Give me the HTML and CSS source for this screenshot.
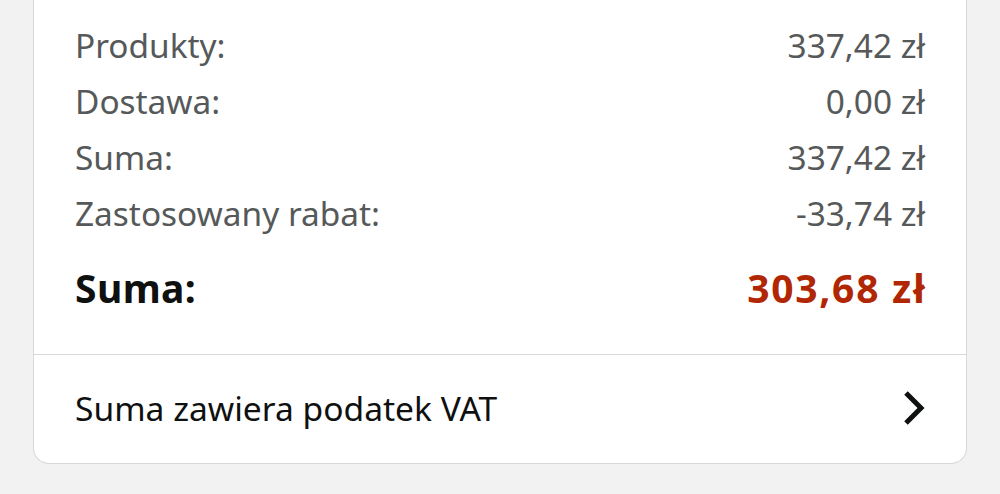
FILE: index.html
```html
<!DOCTYPE html>
<html lang="pl">
<head>
<meta charset="utf-8">
<link rel="stylesheet" href="styles.css">
</head>
<body>
<div class="card">
  <div class="summary">
    <div class="row"><span>Produkty:</span><span>337,42 zł</span></div>
    <div class="row"><span>Dostawa:</span><span>0,00 zł</span></div>
    <div class="row"><span>Suma:</span><span>337,42 zł</span></div>
    <div class="row"><span>Zastosowany rabat:</span><span>-33,74 zł</span></div>
    <div class="row total"><span>Suma:</span><span class="price">303,68 zł</span></div>
  </div>
  <div class="vat">
    <span>Suma zawiera podatek VAT</span>
    <svg class="chev" width="22" height="34" viewBox="0 0 22 34"><path d="M3 2 L18 17 L3 32" fill="none" stroke="#0f1111" stroke-width="5"/></svg>
  </div>
</div>
</body>
</html>
```
FILE: styles.css
```css
html, body {
  margin: 0;
  padding: 0;
  background: #f2f2f2;
  font-family: "Noto Sans", "Open Sans", sans-serif;
}
.card {
  margin: 0 33px 0 33px;
  background: #fff;
  border: 1.5px solid #d5d9d9;
  border-top: none;
  border-radius: 0 0 16px 16px;
  height: 464px;
  box-sizing: border-box;
}
.summary {
  padding: 17px 41px 0 41px;
  height: 355px;
  box-sizing: border-box;
  border-bottom: 1.5px solid #d5d9d9;
}
.row {
  display: flex;
  justify-content: space-between;
  font-size: 33.4px;
  line-height: 56px;
  color: #565959;
}
.row.total {
  margin-top: 19px;
  font-size: 39px;
  font-weight: 700;
  letter-spacing: 0.4px;
  color: #0f1111;
}
.price {
  color: #b12704;
  letter-spacing: 1.7px;
  margin-right: -1.5px;
}
.vat {
  display: flex;
  justify-content: space-between;
  align-items: center;
  padding: 0 41px;
  height: 106px;
  font-size: 33.6px;
  color: #0f1111;
}
.chev {
  display: block;
}
```
